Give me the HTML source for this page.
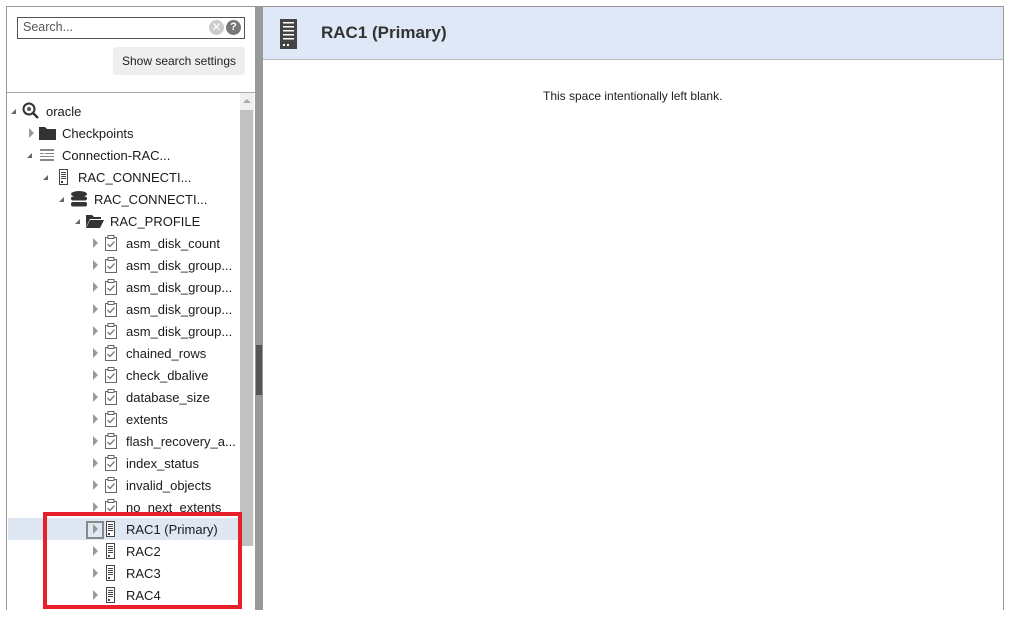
<!DOCTYPE html>
<html><head><meta charset="utf-8"><style>
body{margin:0;width:1009px;height:619px;background:#fff;font-family:"Liberation Sans",sans-serif;font-size:13px;color:#1a1a1a;position:relative;overflow:hidden}
.a{position:absolute}
.row{position:absolute;height:22px;line-height:24px;white-space:nowrap}
.tri{position:absolute;width:0;height:0;border-top:5px solid transparent;border-bottom:5px solid transparent;border-left:5px solid #999;top:6px}
.exp{position:absolute;width:0;height:0;border-left:5px solid transparent;border-bottom:5px solid #666;top:9px}
</style></head><body>
<div class="a" style="left:6px;top:6px;width:249px;height:1px;background:#999"></div>
<div class="a" style="left:6px;top:6px;width:1px;height:604px;background:#999"></div>
<div class="a" style="left:7px;top:92px;width:248px;height:1px;background:#aaa"></div>
<div class="a" style="left:17px;top:17px;width:226px;height:20px;border:1px solid #555;background:#fff"></div>
<div class="a" style="left:23px;top:19px;line-height:17px;color:#555;font-size:12.5px">Search...</div>
<div class="a" style="left:209px;top:20px;width:15px;height:15px;border-radius:50%;background:#ccc;color:#fff;font-size:12px;line-height:15px;text-align:center">✕</div>
<div class="a" style="left:226px;top:20px;width:15px;height:15px;border-radius:50%;background:#777;color:#fff;font-size:11px;font-weight:bold;line-height:15px;text-align:center">?</div>
<div class="a" style="left:113px;top:47px;width:132px;height:28px;background:#eee;border-radius:3px;line-height:28px;text-align:center;color:#222;font-size:12px">Show search settings</div>
<div class="a" style="left:240px;top:93px;width:14px;height:453px;background:#f0f0f0"></div>
<div class="a" style="left:243px;top:99px;width:0;height:0;border-left:4px solid transparent;border-right:4px solid transparent;border-bottom:4px solid #aaa"></div>
<div class="a" style="left:240px;top:110px;width:13px;height:436px;background:#c1c1c1"></div>
<div class="a" style="left:255px;top:6px;width:8px;height:604px;background:#999"></div>
<div class="a" style="left:256px;top:345px;width:6px;height:50px;background:#555"></div>
<div class="a" style="left:263px;top:6px;width:740px;height:53px;background:#dfe8f6;border-bottom:1px solid #bbb"></div>
<div class="a" style="left:263px;top:6px;width:740px;height:1px;background:#999"></div>
<div class="a" style="left:1003px;top:6px;width:1px;height:604px;background:#999"></div>
<svg class="a" style="left:280px;top:19px" width="17" height="30" viewBox="0 0 17 30"><rect width="17" height="30" fill="#444"/><g fill="#fff"><rect x="3" y="3" width="11" height="1.5"/><rect x="3" y="7" width="11" height="1.5"/><rect x="3" y="11" width="11" height="1.5"/><rect x="3" y="15" width="11" height="1.5"/><rect x="3" y="19" width="11" height="1.5"/><rect x="3" y="25" width="2" height="2"/><rect x="7" y="25" width="2" height="2"/></g></svg>
<div class="a" style="left:321px;top:22px;font-size:17px;font-weight:bold;color:#333;line-height:22px">RAC1 (Primary)</div>
<div class="a" style="left:543px;top:89px;font-size:12px;color:#222">This space intentionally left blank.</div>
<div class="a" style="left:8px;top:518px;width:231px;height:22px;background:#dfe7f3"></div>
<div class="row" style="left:0;top:100px;width:240px">
 <div class="exp" style="left:11px"></div>
 <svg class="a" style="left:22px;top:2px" width="18" height="18" viewBox="0 0 18 18"><circle cx="7" cy="7" r="5.5" fill="none" stroke="#333" stroke-width="2"/><line x1="11" y1="11" x2="16" y2="16" stroke="#333" stroke-width="2.5"/><circle cx="7" cy="7" r="2" fill="#555"/></svg>
 <span class="a" style="left:46px">oracle</span></div>
<div class="row" style="left:0;top:122px"><div class="tri" style="left:29px"></div>
 <svg class="a" style="left:39px;top:4px" width="17" height="14"><path d="M0 1h6l2 2h9v11H0z" fill="#333"/></svg>
 <span class="a" style="left:62px">Checkpoints</span></div>
<div class="row" style="left:0;top:144px"><div class="exp" style="left:27px"></div>
 <svg class="a" style="left:40px;top:4px" width="14" height="14"><g fill="#888"><rect y="1" width="14" height="2"/><rect y="5" width="4" height="1"/><rect x="5" y="5" width="9" height="1"/><rect y="8" width="14" height="1"/><rect y="11" width="14" height="2"/></g></svg>
 <span class="a" style="left:62px">Connection-RAC...</span></div>
<div class="row" style="left:0;top:166px"><div class="exp" style="left:43px"></div>
 <svg class="a" style="left:59px;top:3px" width="9" height="16"><rect x=".5" y=".5" width="8" height="15" fill="#fff" stroke="#444"/><g fill="#444"><rect x="2" y="3" width="5" height="1"/><rect x="2" y="5" width="5" height="1"/><rect x="2" y="7" width="5" height="1"/><rect x="2" y="9" width="5" height="1"/><rect x="2" y="12" width="2" height="2"/></g></svg>
 <span class="a" style="left:78px">RAC_CONNECTI...</span></div>
<div class="row" style="left:0;top:188px"><div class="exp" style="left:59px"></div>
 <svg class="a" style="left:71px;top:3px" width="16" height="16"><g fill="#333"><ellipse cx="8" cy="3" rx="8" ry="3"/><rect y="5.5" width="16" height="4" rx="2"/><rect y="11" width="16" height="4.5" rx="2"/></g></svg>
 <span class="a" style="left:94px">RAC_CONNECTI...</span></div>
<div class="row" style="left:0;top:210px"><div class="exp" style="left:75px"></div>
 <svg class="a" style="left:86px;top:4px" width="18" height="14"><path d="M0 1h6l2 2h7v2H4L0 13z" fill="#333"/><path d="M4 6h14l-4 8H0z" fill="#333"/></svg>
 <span class="a" style="left:110px">RAC_PROFILE</span></div>
<div id="items"></div>
<script>
var names=["asm_disk_count","asm_disk_group...","asm_disk_group...","asm_disk_group...","asm_disk_group...","chained_rows","check_dbalive","database_size","extents","flash_recovery_a...","index_status","invalid_objects","no_next_extents"];
var h="";
names.forEach(function(n,i){var t=232+22*i;
h+='<div class="row" style="left:0;top:'+t+'px"><div class="tri" style="left:93px"></div><svg class="a" style="left:104px;top:3px" width="14" height="16"><rect x="1.5" y="2.5" width="11" height="13" fill="#fff" stroke="#666"/><rect x="4" y="0.5" width="6" height="3" fill="#fff" stroke="#666"/><path d="M3.5 9l2.5 2.5 4.5-5" fill="none" stroke="#666" stroke-width="1.2"/></svg><span class="a" style="left:126px">'+n+'</span></div>';});
["RAC1 (Primary)","RAC2","RAC3","RAC4"].forEach(function(n,i){var t=518+22*i;
h+='<div class="row" style="left:0;top:'+t+'px">'+(i==0?'<div class="a" style="left:86px;top:3px;width:14px;height:14px;border:2px solid #888"></div>':'')+'<div class="tri" style="left:93px"></div><svg class="a" style="left:106px;top:3px" width="9" height="16"><rect x=".5" y=".5" width="8" height="15" fill="#fff" stroke="#444"/><g fill="#444"><rect x="2" y="3" width="5" height="1"/><rect x="2" y="5" width="5" height="1"/><rect x="2" y="7" width="5" height="1"/><rect x="2" y="9" width="5" height="1"/><rect x="2" y="12" width="2" height="2"/></g></svg><span class="a" style="left:126px">'+n+'</span></div>';});
document.getElementById("items").innerHTML=h;
</script>
<div class="a" style="left:43px;top:512px;width:191px;height:89px;border:4px solid #e8202a"></div>
</body></html>
